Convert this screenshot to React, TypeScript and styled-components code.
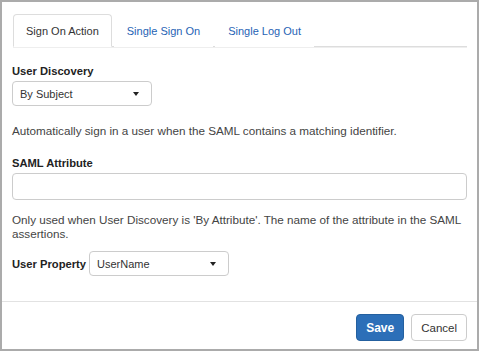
import React from "react";
import styled, { createGlobalStyle } from "styled-components";

const Global = createGlobalStyle`
  html, body { margin: 0; padding: 0; background: #fff; }
  body { font-family: "Liberation Sans", Arial, sans-serif; font-size: 12px; color: #333; }
  * { box-sizing: border-box; }
`;

const Frame = styled.div`
  width: 479px;
  height: 351px;
  border: 2px solid #ababab;
  display: flex;
  flex-direction: column;
  background: #fff;
`;

const Body = styled.div`
  flex: 1;
  padding: 12px 10px 0 10px;
  display: flex;
  flex-direction: column;
`;

const TabBar = styled.div`
  display: flex;
  margin-left: 1px;
  border-bottom: 1px solid #ddd;
  box-shadow: 0 1px 0 #eee;
`;

const Tab = styled.div<{ $active?: boolean }>`
  height: 33px;
  padding: 0 12px;
  margin-right: 2px;
  margin-bottom: -1px;
  display: flex;
  align-items: center;
  font-size: 11px;
  color: ${(p) => (p.$active ? "#333" : "#1f63b5")};
  border: 1px solid ${(p) => (p.$active ? "#ddd" : "transparent")};
  border-bottom-color: ${(p) => (p.$active ? "#fff" : "transparent")};
  border-radius: 4px 4px 0 0;
  background: #fff;
`;

const Label = styled.div`
  font-weight: bold;
  font-size: 11.2px;
  color: #222;
`;

const Section = styled.div<{ $mt: number }>`
  margin-top: ${(p) => p.$mt}px;
  display: flex;
  flex-direction: column;
`;

const Spacer = styled.div<{ $h: number }>`
  height: ${(p) => p.$h}px;
`;

const Select = styled.div<{ $w: number }>`
  width: ${(p) => p.$w}px;
  height: 25px;
  border: 1px solid #ccc;
  border-radius: 4px;
  display: flex;
  align-items: center;
  justify-content: space-between;
  padding: 0 12px 0 7px;
  font-size: 11px;
  color: #333;
  background: #fff;
`;

const Caret = styled.span`
  width: 0;
  height: 0;
  margin-top: 1px;
  border-left: 3px solid transparent;
  border-right: 3px solid transparent;
  border-top: 4px solid #222;
`;

const Help = styled.div`
  font-size: 11.7px;
  color: #444;
  line-height: 14px;
`;

const Input = styled.div`
  height: 27px;
  border: 1px solid #ccc;
  border-radius: 4px;
`;

const Row = styled.div`
  display: flex;
  align-items: center;
  gap: 3px;
`;

const Footer = styled.div`
  height: 48px;
  border-top: 1px solid #e2e2e2;
  display: flex;
  justify-content: flex-end;
  align-items: flex-start;
  padding: 12px 10px 0 0;
  gap: 7px;
`;

const Button = styled.button<{ $primary?: boolean }>`
  height: 27px;
  padding: 0 9px;
  font-family: "Liberation Sans", Arial, sans-serif;
  font-size: ${(p) => (p.$primary ? "12px" : "11.5px")};
  font-weight: ${(p) => (p.$primary ? "bold" : "normal")};
  color: ${(p) => (p.$primary ? "#fff" : "#333")};
  background: ${(p) => (p.$primary ? "#2c6fb8" : "#fff")};
  border: 1px solid ${(p) => (p.$primary ? "#24609f" : "#ccc")};
  border-radius: 4px;
`;

export default function App() {
  return (
    <>
      <Global />
      <Frame>
        <Body>
          <TabBar>
            <Tab $active>Sign On Action</Tab>
            <Tab>Single Sign On</Tab>
            <Tab>Single Log Out</Tab>
          </TabBar>
          <Section $mt={18}>
            <Label>User Discovery</Label>
            <Spacer $h={4} />
            <Select $w={140}>
              <span>By Subject</span>
              <Caret />
            </Select>
          </Section>
          <Section $mt={18}>
            <Help>Automatically sign in a user when the SAML contains a matching identifier.</Help>
          </Section>
          <Section $mt={19}>
            <Label>SAML Attribute</Label>
            <Spacer $h={4} />
            <Input />
            <Spacer $h={13} />
            <Help>
              Only used when User Discovery is 'By Attribute'. The name of the attribute in the SAML
              assertions.
            </Help>
          </Section>
          <Section $mt={10}>
            <Row>
              <Label>User Property</Label>
              <Select $w={140}>
                <span>UserName</span>
                <Caret />
              </Select>
            </Row>
          </Section>
        </Body>
        <Footer>
          <Button $primary>Save</Button>
          <Button>Cancel</Button>
        </Footer>
      </Frame>
    </>
  );
}
